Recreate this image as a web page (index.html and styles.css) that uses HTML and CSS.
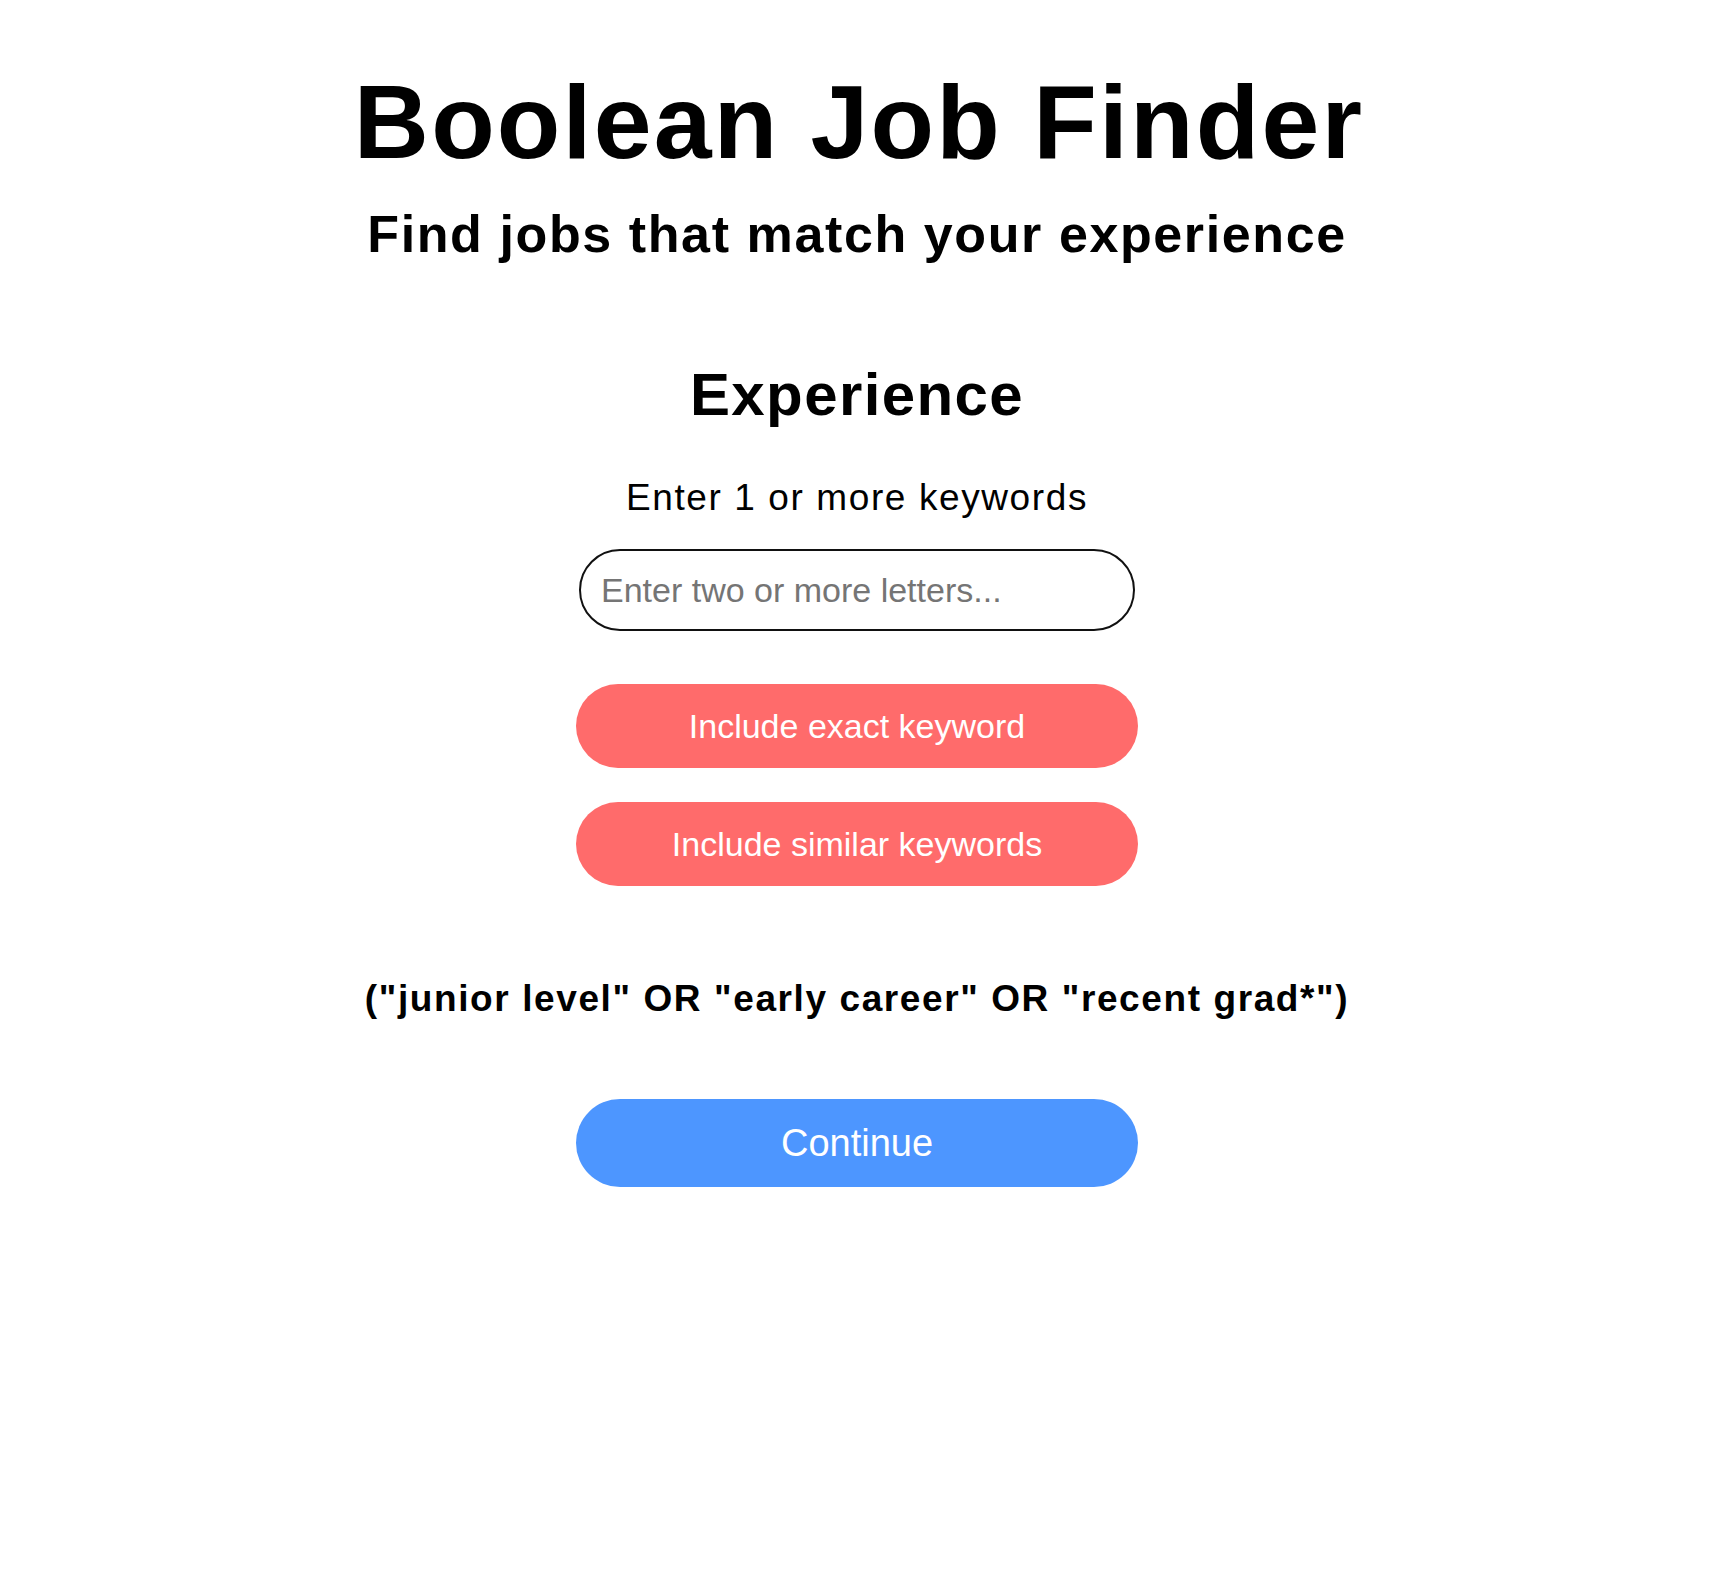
FILE: index.html
```html
<!DOCTYPE html>
<html lang="en">
<head>
<meta charset="utf-8">
<title>Boolean Job Finder</title>
<link rel="stylesheet" href="styles.css">
</head>
<body>
<main class="page">
  <h1 class="title">Boolean Job Finder</h1>
  <h2 class="subtitle">Find jobs that match your experience</h2>
  <h3 class="section-title">Experience</h3>
  <p class="hint">Enter 1 or more keywords</p>
  <input class="keyword-input" type="text" placeholder="Enter two or more letters...">
  <button class="btn btn-red btn-exact" type="button">Include exact keyword</button>
  <button class="btn btn-red btn-similar" type="button">Include similar keywords</button>
  <p class="boolean">("junior level" OR "early career" OR "recent grad*")</p>
  <button class="btn btn-blue btn-continue" type="button">Continue</button>
</main>
</body>
</html>
```
FILE: styles.css
```css
html, body {
  margin: 0;
  padding: 0;
  background: #ffffff;
}

body {
  font-family: "Liberation Sans", Arial, sans-serif;
  color: #000000;
  letter-spacing: 1.6px;
}

.page {
  display: flex;
  flex-direction: column;
  align-items: center;
  padding-top: 70px;
}

.title {
  margin: 0;
  padding-left: 4px;
  font-size: 104px;
  line-height: 1;
  font-weight: 700;
  letter-spacing: 2.2px;
}

.subtitle {
  margin: 34px 0 0;
  font-size: 52px;
  line-height: 1;
  font-weight: 700;
}

.section-title {
  margin: 105px 0 0;
  font-size: 60px;
  line-height: 1;
  font-weight: 700;
  letter-spacing: 1.4px;
}

.hint {
  margin: 54px 0 0;
  font-size: 37px;
  line-height: 1;
  font-weight: 400;
}

.keyword-input {
  box-sizing: border-box;
  margin: 33px 0 0;
  width: 556px;
  height: 82px;
  padding: 0 20px;
  border: 2px solid #111111;
  border-radius: 41px;
  font-family: "Liberation Sans", Arial, sans-serif;
  font-size: 34px;
  color: #000000;
  background: #ffffff;
  outline: none;
}

.keyword-input::placeholder {
  color: #757575;
}

.btn {
  box-sizing: border-box;
  width: 562px;
  height: 84px;
  border: none;
  border-radius: 42px;
  font-family: "Liberation Sans", Arial, sans-serif;
  font-size: 34px;
  color: #ffffff;
  cursor: pointer;
  padding: 0;
}

.btn-red {
  background: #ff6b6b;
}

.btn-exact {
  margin-top: 53px;
}

.btn-similar {
  margin-top: 34px;
}

.boolean {
  margin: 94px 0 0;
  font-size: 37px;
  line-height: 1;
  font-weight: 700;
}

.btn-blue {
  background: #4d96ff;
}

.btn-continue {
  margin-top: 82px;
  height: 88px;
  border-radius: 44px;
  font-size: 38px;
}
```
